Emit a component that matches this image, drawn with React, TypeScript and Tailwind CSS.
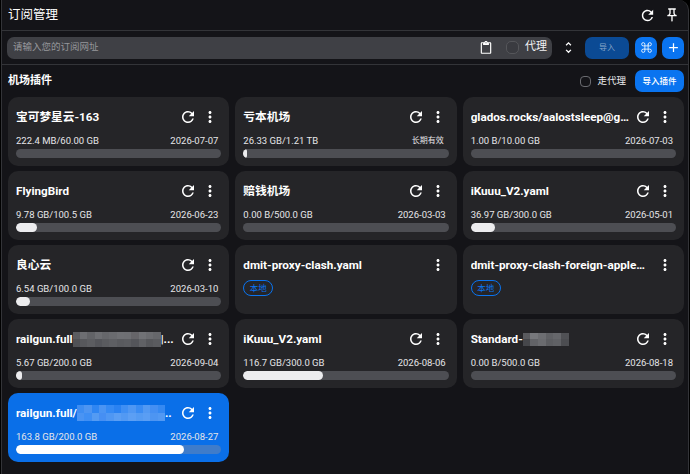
import * as React from "react";
import { MdAdd, MdMoreVert, MdOutlineContentPaste, MdOutlinePushPin, MdRefresh, MdUnfoldMore } from "react-icons/md";
import { Command } from "lucide-react";

const font = "[font-family:Roboto,'Noto_Sans_CJK_SC',sans-serif]";

interface Profile {
  name: React.ReactNode;
  usage?: string;
  date?: string;
  percent?: number;
  local?: boolean;
  active?: boolean;
}

const grayCells = [
  "bg-[#5b5c60]", "bg-[#6d6e72]", "bg-[#626367]", "bg-[#6d6e72]", "bg-[#66676b]", "bg-[#6a6b6f]", "bg-[#6f7074]", "bg-[#6e6f73]", "bg-[#666569]", "bg-[#717276]", "bg-[#6b6c70]", "bg-[#66676b]",
  "bg-[#505155]", "bg-[#57585c]", "bg-[#5c5d61]", "bg-[#54555a]", "bg-[#5a5b5f]", "bg-[#5e5f63]", "bg-[#595a5e]", "bg-[#5b5c60]", "bg-[#54555a]", "bg-[#606165]", "bg-[#56575b]", "bg-[#5a5b5f]",
];

const blueCells = [
  "bg-[#3d8df2]", "bg-[#4d95f2]", "bg-[#2f86f3]", "bg-[#4a94f3]", "bg-[#358af4]", "bg-[#2a82f2]", "bg-[#3f8ff4]", "bg-[#4f97f3]", "bg-[#3a8cf3]", "bg-[#5299f3]", "bg-[#448ff3]", "bg-[#3589f2]",
  "bg-[#4a94f3]", "bg-[#3f8ff4]", "bg-[#549bf3]", "bg-[#468ff3]", "bg-[#4f97f3]", "bg-[#5a9ef4]", "bg-[#5299f3]", "bg-[#5c9ff4]", "bg-[#549bf3]", "bg-[#5a9ef4]", "bg-[#4d95f2]", "bg-[#5299f3]",
];

const shortCells = [
  "bg-[#5a5b5f]", "bg-[#77787c]", "bg-[#6d6e72]", "bg-[#606165]", "bg-[#66676b]", "bg-[#505155]",
  "bg-[#46474b]", "bg-[#626367]", "bg-[#6a6b6f]", "bg-[#5c5d61]", "bg-[#606165]", "bg-[#4c4d51]",
];

function Mosaic({ cells, className }: { cells: string[]; className: string }) {
  return (
    <span className={`grid shrink-0 grid-rows-2 grid-flow-row ${className}`}>
      {cells.map((c, i) => (
        <span key={i} className={c} />
      ))}
    </span>
  );
}

const profiles: Profile[] = [
  { name: "宝可梦星云-163", usage: "222.4 MB/60.00 GB", date: "2026-07-07", percent: 0 },
  { name: "亏本机场", usage: "26.33 GB/1.21 TB", date: "长期有效", percent: 2 },
  { name: "glados.rocks/aalostsleep@gmail.com", usage: "1.00 B/10.00 GB", date: "2026-07-03", percent: 0 },
  { name: "FlyingBird", usage: "9.78 GB/100.5 GB", date: "2026-06-23", percent: 10 },
  { name: "赔钱机场", usage: "0.00 B/500.0 GB", date: "2026-03-03", percent: 0 },
  { name: "iKuuu_V2.yaml", usage: "36.97 GB/300.0 GB", date: "2026-05-01", percent: 12 },
  { name: "良心云", usage: "6.54 GB/100.0 GB", date: "2026-03-10", percent: 7 },
  { name: "dmit-proxy-clash.yaml", local: true },
  { name: "dmit-proxy-clash-foreign-apple-media.yaml", local: true },
  {
    name: (
      <span className="flex items-center">
        <span>railgun.full</span>
        <Mosaic cells={grayCells} className="h-[15px] w-[88px] grid-cols-12" />
        <span>|...</span>
      </span>
    ),
    usage: "5.67 GB/200.0 GB",
    date: "2026-09-04",
    percent: 3,
  },
  { name: "iKuuu_V2.yaml", usage: "116.7 GB/300.0 GB", date: "2026-08-06", percent: 39 },
  {
    name: (
      <span className="flex items-center">
        <span>Standard-</span>
        <Mosaic cells={shortCells} className="h-[13px] w-[46px] grid-cols-6" />
      </span>
    ),
    usage: "0.00 B/500.0 GB",
    date: "2026-08-18",
    percent: 0,
  },
  {
    name: (
      <span className="flex items-center">
        <span>railgun.full/</span>
        <Mosaic cells={blueCells} className="h-[16px] w-[88px] grid-cols-12" />
        <span>..</span>
      </span>
    ),
    usage: "163.8 GB/200.0 GB",
    date: "2026-08-27",
    percent: 82,
    active: true,
  },
];

function ProfileCard({ profile }: { profile: Profile }) {
  const { name, usage, date, percent = 0, local, active } = profile;
  const isPermanent = date === "长期有效";
  return (
    <div className={`flex h-[69px] flex-col rounded-[10px] px-2 pt-2 ${active ? "bg-[#0a6fe8]" : "bg-[#252528]"}`}>
      <div className="flex h-6 items-center pr-[2px] text-white">
        <div className={`min-w-0 flex-1 truncate text-[11.7px] leading-6 font-bold ${local ? "pr-1.5" : ""}`}>{name}</div>
        {!local && <MdRefresh className="shrink-0 text-[18px]" />}
        <MdMoreVert className="ml-1 shrink-0 text-[18px]" />
      </div>
      {local ? (
        <span className="mt-[3px] flex h-4 w-[30px] items-center justify-center rounded-full border border-[#0a74f0] text-[8.5px] text-[#0a74f0]">
          本地
        </span>
      ) : (
        <>
          <div className="mt-1 flex h-4 items-center justify-between pr-[3px] text-[9.5px] text-[#e6e6e8]">
            <span>{usage}</span>
            <span className={isPermanent ? "pr-[2px] text-[8px]" : ""}>{date}</span>
          </div>
          <div className={`h-[8.5px] overflow-hidden rounded-full ${active ? "bg-[#3f7cca]" : "bg-[#4d4e53]"}`}>
            <div
              className={`h-full rounded-full ${active ? "bg-white" : "bg-[#ececee]"}`}
              style={{ width: `${percent}%` }}
            />
          </div>
        </>
      )}
    </div>
  );
}

export default function App() {
  return (
    <div className={`h-[474px] w-[690px] overflow-hidden bg-black pl-px pr-px ${font}`}>
      <div className="h-full rounded-tr-[10px] border-x border-[#333438] bg-[#141418] text-white">
        <header className="flex h-[30px] items-center justify-between pr-2 pl-1.5">
          <h1 className="text-[12.5px] font-normal">订阅管理</h1>
          <div className="flex items-center gap-2">
            <MdRefresh className="text-[17px]" />
            <MdOutlinePushPin className="text-[16px]" />
          </div>
        </header>

        <div className="flex h-[35px] items-center border-y border-[#333438] pr-1 pl-[5px]">
          <div className="flex h-[22px] flex-1 items-center rounded-[7px] bg-[#3f4045] pr-[5px] pl-1.5">
            <span className="flex-1 text-[9.5px] text-[#96979b]">请输入您的订阅网址</span>
            <MdOutlineContentPaste className="text-[14px]" />
            <span className="mr-1.5 ml-[13px] h-[13px] w-[13px] rounded-[5px] border border-[#55565a] bg-[#3a3b40]" />
            <span className="text-[11px] text-[#f0f0f2]">代理</span>
          </div>
          <MdUnfoldMore className="mx-[9px] text-[15px]" />
          <button className="flex h-[22px] w-11 items-center justify-center rounded-[7px] bg-[#0b4a94] text-[8px] text-[#8aa6c8]">
            导入
          </button>
          <button className="ml-1.5 flex h-[22px] w-[22px] items-center justify-center rounded-[7px] bg-[#0a74f0]">
            <Command size={13} strokeWidth={1.5} />
          </button>
          <button className="ml-[5px] flex h-[22px] w-[22px] items-center justify-center rounded-[7px] bg-[#0a74f0]">
            <MdAdd className="text-[15px]" />
          </button>
        </div>

        <div className="flex h-8 items-center pr-1 pl-1.5">
          <h2 className="flex-1 text-[11px] font-bold">机场插件</h2>
          <span className="h-[11px] w-[11px] rounded-[4px] border border-[#6a6b70]" />
          <span className="mr-[9px] ml-1.5 text-[9.5px] text-[#ededf0]">走代理</span>
          <button className="flex h-[22px] w-[49px] items-center justify-center rounded-[7px] bg-[#0a74f0] text-[8.5px] font-medium">
            导入插件
          </button>
        </div>

        <div className="grid grid-cols-3 gap-x-1.5 gap-y-[5px] pr-1 pl-1.5">
          {profiles.map((profile, i) => (
            <ProfileCard key={i} profile={profile} />
          ))}
        </div>
      </div>
    </div>
  );
}
